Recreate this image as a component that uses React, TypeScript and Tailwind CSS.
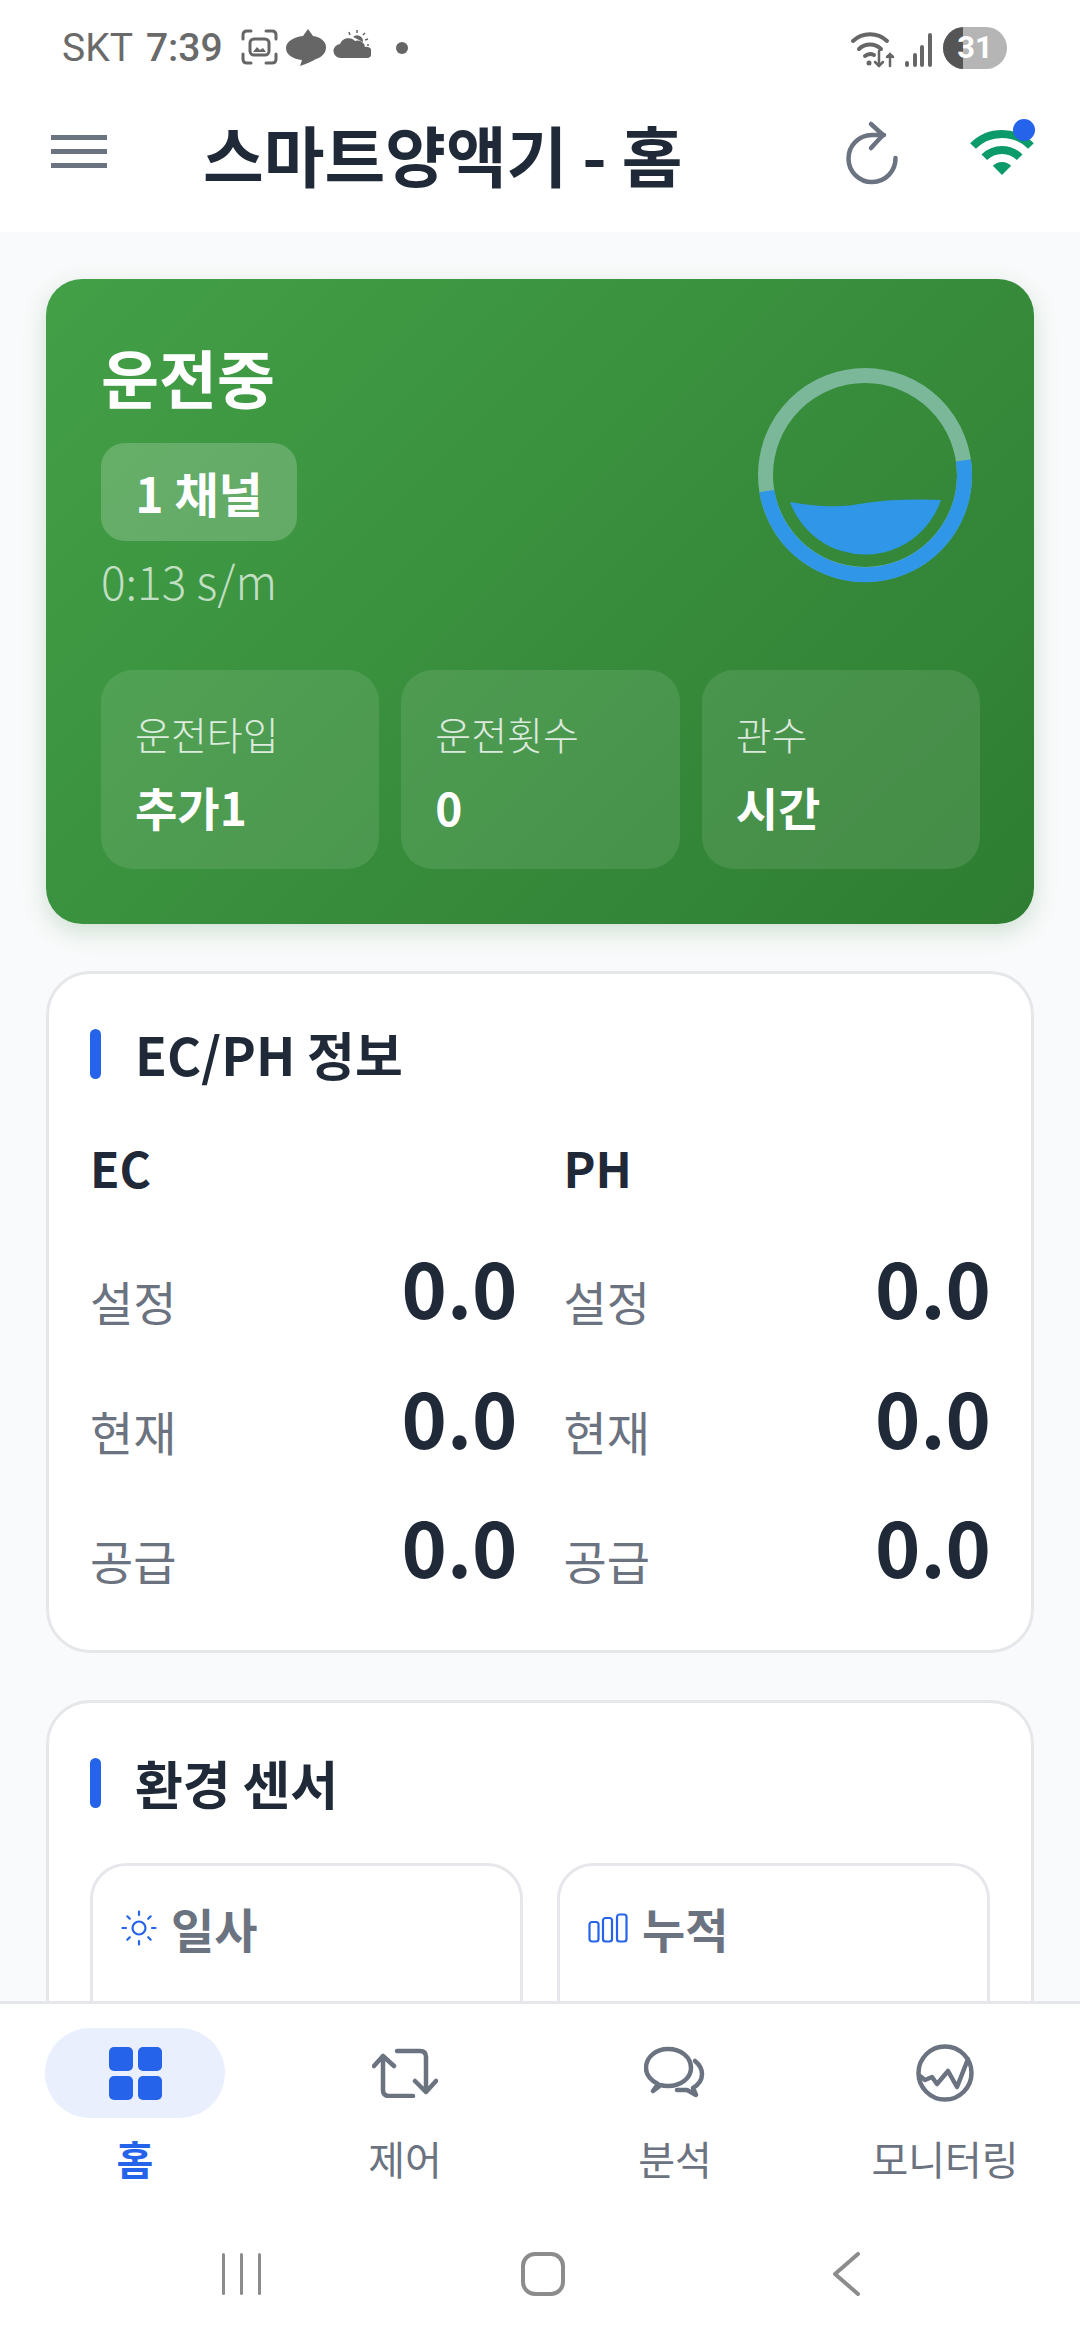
import React from "react";

const Sensor = ({ icon, label }: { icon: React.ReactNode; label: string }) => (
  <div className="h-[300px] rounded-[36px] border-[3px] border-[#e5e7eb] bg-white pl-[28px] pt-[30px]">
    <div className="flex items-center gap-[14px] h-[64px] text-[47px] leading-[64px] font-semibold text-[#6b7280]">
      {icon}
      <span>{label}</span>
    </div>
  </div>
);

const Row = ({ label }: { label: string }) => (
  <div className="flex justify-between h-[129.500px]">
    <span className="text-[47px] leading-[64px] mt-[33px] text-[#6b7280]">{label}</span>
    <span className="text-[77px] leading-[100px] font-bold text-[#1f2937]">0.0</span>
  </div>
);

const Col = ({ title }: { title: string }) => (
  <div>
    <div className="text-[48px] leading-[64px] font-semibold text-[#1f2937] mb-[37px]">{title}</div>
    <Row label="설정" />
    <Row label="현재" />
    <Row label="공급" />
  </div>
);

const Stat = ({ label, value }: { label: string; value: string }) => (
  <div className="rounded-[32px] bg-white/10 h-[199px] pl-[34px] pt-[38px]">
    <div className="text-[39px] leading-[50px] font-light text-white/80">{label}</div>
    <div className="text-[46px] leading-[60px] font-bold text-white mt-[18px]">{value}</div>
  </div>
);

const SectionTitle = ({ children }: { children: React.ReactNode }) => (
  <div className="flex items-center gap-[34px] h-[64px]">
    <div className="w-[11px] h-[50px] rounded-full bg-[#2563eb]" />
    <div className="text-[52px] leading-[64px] font-semibold text-[#1f2937]">{children}</div>
  </div>
);

const NavItem = ({ icon, label, active }: { icon: React.ReactNode; label: string; active?: boolean }) => (
  <div className="flex flex-col items-center">
    <div className={`w-[180px] h-[90px] rounded-[45px] flex items-center justify-center ${active ? "bg-[#e9effd]" : ""}`}>
      {icon}
    </div>
    <div className={`mt-[16px] text-[40px] leading-[48px] ${active ? "font-bold text-[#2563eb]" : "text-[#6b7280]"}`}>{label}</div>
  </div>
);

export default function App() {
  return (
    <div className="w-[1080px] h-[2340px] overflow-hidden flex flex-col bg-[#f9fafb] font-['Noto_Sans_CJK_KR',sans-serif]">
      {/* status bar */}
      <div className="h-[92px] shrink-0 bg-white flex items-start pl-[62px] pt-[26px] font-['Roboto',sans-serif] text-[39px] leading-[44px] text-[#6a6a6a]">
        <span>SKT</span>
        <span className="ml-[13px] font-medium">7:39</span>
        <svg width="130" height="40" viewBox="0 0 130 40" className="ml-[18px] mt-[3px]" fill="none">
          <path d="M2 10V6Q2 2 6 2H10M25 2H31Q35 2 35 6V10M35 25V30Q35 34 31 34H25M10 34H6Q2 34 2 30V25" stroke="#666" strokeWidth="3" strokeLinecap="round" />
          <rect x="9" y="10" width="19" height="16" rx="4" stroke="#666" strokeWidth="3" />
          <path d="M12 23l4-5 3 3 3-2 3 4z" fill="#666" />
          <path d="M67 0L62 7C52 8 45 13 45 19C45 26 52 30 61 31L59 37C66 35 71 32 75 30C81 28 85 24 85 18C85 12 79 8 72 7Z" fill="#666" />
          <path d="M100 29a7 7 0 0 1 -1 -14a9 9 0 0 1 15 -3a7.500 7.500 0 0 1 10 6a5.500 5.500 0 0 1 3 11z" fill="#666" />
          <path d="M108 6a9 9 0 0 1 15 8" stroke="#fff" strokeWidth="2" />
          <path d="M112 8a6 6 0 0 1 10 5z" fill="#666" />
          <path d="M116 1v3M108 3l1 3M124 4l-2 2M127 10l-3 1M128 16h-2" stroke="#666" strokeWidth="1.500" />
        </svg>
        <div className="w-[12px] h-[12px] rounded-full bg-[#666] ml-[25px] mt-[16px]" />
        <svg width="87" height="44" viewBox="0 0 87 44" className="ml-auto mt-[1px]" fill="none" stroke="#666" strokeLinecap="round">
          <path d="M3 14a25 25 0 0 1 34 0M9 22a16 16 0 0 1 22 0M15 29a8 8 0 0 1 9 -1" strokeWidth="4" />
          <circle cx="19" cy="36" r="2.500" fill="#666" stroke="none" />
          <path d="M29 24v15M25 35l4 4 4 -4M40 39v-12M37 30l3 -3 3 3" strokeWidth="2.500" />
          <path d="M57 36v2M65 28v10M72 20v18M80 8v30" strokeWidth="4" />
        </svg>
        <div className="relative w-[64px] h-[42px] ml-[6px] mt-[1px] mr-[73px] rounded-[21px] overflow-hidden bg-[#b5b5b5] flex items-center justify-center text-white font-bold text-[31px]">
          <div className="absolute left-0 top-0 bottom-0 w-[20px] bg-[#555]" />
          <span className="relative">31</span>
        </div>
      </div>

      {/* header */}
      <div className="h-[140px] shrink-0 bg-white flex items-start relative">
        <div className="ml-[51px] mt-[43px] w-[56px] flex flex-col gap-[9px]">
          <div className="h-[5px] bg-[#6b7280]" />
          <div className="h-[5px] bg-[#6b7280]" />
          <div className="h-[5px] bg-[#6b7280]" />
        </div>
        <div className="ml-[96px] mt-[25px] text-[66px] leading-[72px] font-bold text-[#1f2937]">스마트양액기 - 홈</div>
        <svg width="200" height="80" viewBox="840 110 200 80" className="absolute right-[40px] top-[18px]" fill="none">
          <path d="M884 135H872A23.500 23.500 0 1 0 895.500 158" stroke="#6b7280" strokeWidth="4.500" strokeLinecap="round" />
          <path d="M871 124L883 135L871 148" stroke="#6b7280" strokeWidth="4.500" strokeLinecap="round" strokeLinejoin="round" />
          <path d="M973 146A41 41 0 0 1 1031 146M984.300 157.300A25 25 0 0 1 1019.700 157.300" stroke="#0b9a6a" strokeWidth="8" />
          <path d="M1002 175L992.800 165.800A13 13 0 0 1 1011.200 165.800Z" fill="#0b9a6a" />
          <circle cx="1024" cy="130" r="11" fill="#2563eb" />
        </svg>
      </div>

      <main className="flex-1 overflow-hidden px-[46px] pt-[47px] flex flex-col gap-[47px] min-h-0">
        {/* hero */}
        <div className="shrink-0 h-[645px] rounded-[36px] bg-linear-135 from-[#43a047] to-[#2e7d32] shadow-[0_8px_24px_rgba(46,125,50,0.2)] pl-[55px] pr-[54px] pt-[59px]">
          <div className="flex justify-between h-[332px]">
            <div>
              <div className="text-[63px] leading-[76px] font-semibold text-white">운전중</div>
              <div className="mt-[29px] w-[196px] h-[98px] rounded-[24px] bg-white/20 flex items-center justify-center text-[48px] font-bold text-white">1 채널</div>
              <div className="mt-[11px] text-[46px] leading-[56px] font-light text-white/70">0:13 s/m</div>
            </div>
            <svg width="220" height="220" viewBox="0 0 220 220" className="mt-[27px] mr-[5px]" fill="none">
              <circle cx="110" cy="110" r="99.500" stroke="#7ab899" strokeWidth="15" />
              <path d="M208.400 95.300A99.500 99.500 0 0 1 11.800 126.100" stroke="#2f96e8" strokeWidth="15" />
              <path d="M35 137C70 143 90 142 110 138C135 134 165 134 186 135A80 80 0 0 1 35 137Z" fill="#2f96e8" />
            </svg>
          </div>
          <div className="grid grid-cols-3 gap-[22px]">
            <Stat label="운전타입" value="추가1" />
            <Stat label="운전횟수" value="0" />
            <Stat label="관수" value="시간" />
          </div>
        </div>

        {/* EC/PH */}
        <div className="shrink-0 h-[682px] rounded-[44px] border-[3px] border-[#e5e7eb] bg-white pl-[41px] pr-[40px] pt-[48px]">
          <SectionTitle>EC/PH 정보</SectionTitle>
          <div className="grid grid-cols-2 gap-[46px] mt-[49px]">
            <Col title="EC" />
            <Col title="PH" />
          </div>
        </div>

        {/* sensors */}
        <div className="shrink-0 h-[500px] rounded-[44px] border-[3px] border-[#e5e7eb] bg-white px-[41px] pt-[48px]">
          <SectionTitle>환경 센서</SectionTitle>
          <div className="grid grid-cols-2 gap-[34px] mt-[48px]">
            <Sensor
              label="일사"
              icon={
                <svg width="36" height="36" viewBox="0 0 36 36" fill="none" stroke="#2563eb" strokeWidth="2.200" strokeLinecap="round">
                  <circle cx="18" cy="18" r="6.500" />
                  <path d="M18 1.500v3.500M18 31v3.500M1.500 18H5M31 18h3.500M6.300 6.300l2.500 2.500M27.200 27.200l2.500 2.500M6.300 29.700l2.500 -2.500M27.200 8.800l2.500 -2.500" />
                </svg>
              }
            />
            <Sensor
              label="누적"
              icon={
                <svg width="40" height="30" viewBox="0 0 40 30" fill="none" stroke="#2563eb" strokeWidth="2.200">
                  <rect x="1.500" y="9" width="9" height="19.500" rx="2.500" />
                  <rect x="15" y="5" width="9" height="23.500" rx="2.500" />
                  <rect x="29" y="1.500" width="9.500" height="27" rx="2.500" />
                </svg>
              }
            />
          </div>
        </div>
      </main>

      {/* bottom nav */}
      <div className="shrink-0 h-[339px] bg-white border-t-[3px] border-[#e5e7eb] pt-[24px] relative z-10">
        <div className="grid grid-cols-4">
          <NavItem
            active
            label="홈"
            icon={
              <div className="grid grid-cols-2 gap-[5px] w-[53px]">
                <div className="h-[24px] rounded-[5px] bg-[#2563eb]" />
                <div className="h-[24px] rounded-[5px] bg-[#2563eb]" />
                <div className="h-[24px] rounded-[5px] bg-[#2563eb]" />
                <div className="h-[24px] rounded-[5px] bg-[#2563eb]" />
              </div>
            }
          />
          <NavItem
            label="제어"
            icon={
              <svg width="66" height="50" viewBox="372 2048 66 50" fill="none" stroke="#6b7280" strokeWidth="4.500" strokeLinecap="round" strokeLinejoin="round">
                <path d="M374 2066L383 2056L394 2066M383 2056V2090Q383 2096 389 2096H413" />
                <path d="M397 2051H420Q426 2051 426 2057V2092M415 2081L426 2092L436 2081" />
              </svg>
            }
          />
          <NavItem
            label="분석"
            icon={
              <svg width="62" height="54" viewBox="645 2045 62 54" fill="none" stroke="#6b7280" strokeWidth="4.500" strokeLinecap="round" strokeLinejoin="round">
                <path d="M659 2083C651 2079 647 2073 647 2067C647 2056 657 2048 669 2048C682 2048 692 2056 692 2067C692 2077 682 2085 669 2085C666 2085 664 2085 662 2084L654 2090Z" />
                <path d="M696 2060C701 2064 703 2069 703 2073C703 2079 699 2084 694 2087L697 2094L688 2089H678" />
              </svg>
            }
          />
          <NavItem
            label="모니터링"
            icon={
              <svg width="60" height="60" viewBox="915 2042 60 60" fill="none" stroke="#6b7280" strokeWidth="4.500" strokeLinecap="round" strokeLinejoin="round">
                <circle cx="945" cy="2072" r="26.500" />
                <path d="M920 2075L925 2079L932 2076L937 2083L948 2070L957 2086L968 2058" />
              </svg>
            }
          />
        </div>
        <div className="flex items-center pl-[222px] mt-[70px] h-[44px]">
          <div className="flex gap-[15px]">
            <div className="w-[3px] h-[42px] bg-[#8c8c8c] rounded-full" />
            <div className="w-[3px] h-[42px] bg-[#8c8c8c] rounded-full" />
            <div className="w-[3px] h-[42px] bg-[#8c8c8c] rounded-full" />
          </div>
          <div className="ml-[260px] w-[44px] h-[44px] rounded-[14px] border-[4px] border-[#8c8c8c]" />
          <svg width="28" height="44" viewBox="0 0 28 44" className="ml-[267px]" fill="none" stroke="#8c8c8c" strokeWidth="4" strokeLinecap="round" strokeLinejoin="round">
            <path d="M26 2L3 22L26 42" />
          </svg>
        </div>
      </div>
    </div>
  );
}
